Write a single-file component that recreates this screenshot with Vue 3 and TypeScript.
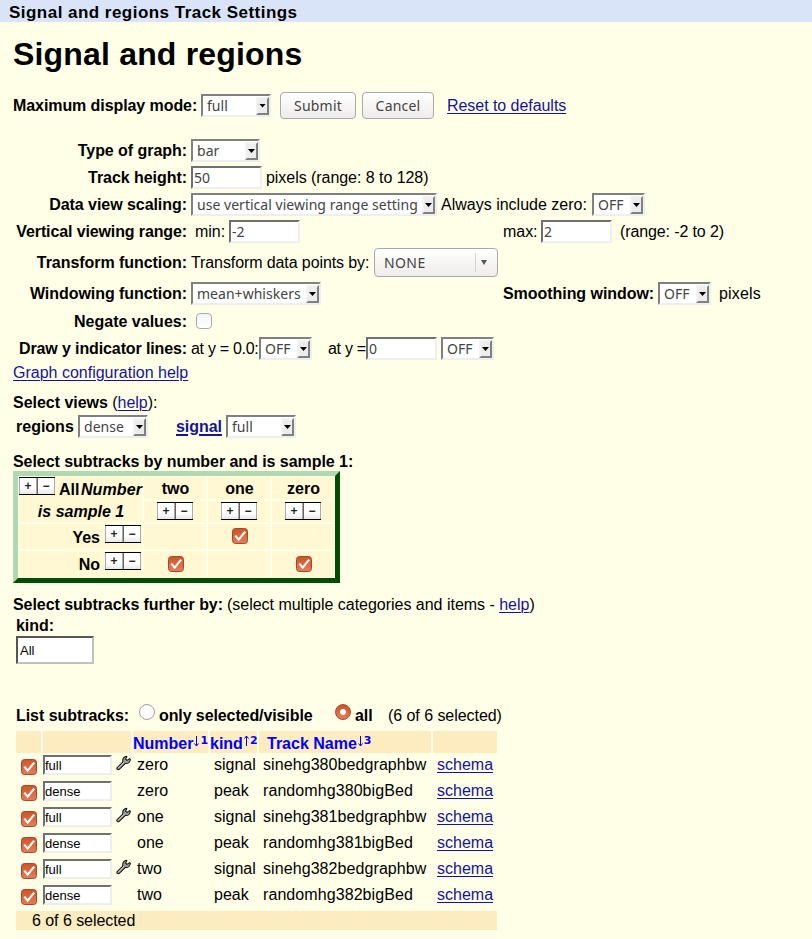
<script setup lang="ts">
import { ref } from 'vue'

interface Subtrack {
  mode: string
  number: string
  kind: string
  name: string
}

const trackHeight = ref('50')
const rangeMin = ref('-2')
const rangeMax = ref('2')
const lineAt = ref('0')

const columns: string[] = ['two', 'one', 'zero']
const matrix: { label: string; checked: boolean[] }[] = [
  { label: 'Yes', checked: [false, true, false] },
  { label: 'No', checked: [true, false, true] },
]

const subtracks: Subtrack[] = [
  { mode: 'full', number: 'zero', kind: 'signal', name: 'sinehg380bedgraphbw' },
  { mode: 'dense', number: 'zero', kind: 'peak', name: 'randomhg380bigBed' },
  { mode: 'full', number: 'one', kind: 'signal', name: 'sinehg381bedgraphbw' },
  { mode: 'dense', number: 'one', kind: 'peak', name: 'randomhg381bigBed' },
  { mode: 'full', number: 'two', kind: 'signal', name: 'sinehg382bedgraphbw' },
  { mode: 'dense', number: 'two', kind: 'peak', name: 'randomhg382bigBed' },
]
</script>

<template>
  <div class="page">
    <svg class="defs" width="0" height="0">
      <defs>
        <linearGradient id="orange" x1="0" y1="0" x2="0" y2="1">
          <stop offset="0" stop-color="#cf5226" />
          <stop offset="1" stop-color="#e57f5b" />
        </linearGradient>
        <symbol id="tick" viewBox="0 0 16 16">
          <rect x=".5" y=".5" width="15" height="15" rx="3" fill="url(#orange)" stroke="#a04a2c" />
          <path d="M3.3 7.6 L6.7 11.6 L13.2 3.6" fill="none" stroke="#fff" stroke-width="2.2" />
        </symbol>
      </defs>
    </svg>

    <header class="bar">Signal and regions Track Settings</header>
    <h1>Signal and regions</h1>

    <div class="row mode">
      <b class="w-mode">Maximum display mode:</b>
      <span class="sel w70"><span>full</span><i></i></span>
      <button class="btn submit">Submit</button>
      <button class="btn cancel">Cancel</button>
      <a class="reset">Reset to defaults</a>
    </div>

    <div class="row">
      <b class="label">Type of graph:</b>
      <span class="sel w69"><span>bar</span><i></i></span>
    </div>
    <div class="row">
      <b class="label">Track height:</b>
      <input v-model="trackHeight" class="field" />
      <span class="gap4">pixels (range: 8 to 128)</span>
    </div>
    <div class="row">
      <b class="label">Data view scaling:</b>
      <span class="sel w246"><span>use vertical viewing range setting</span><i></i></span>
      <span class="gap4 w-zero">Always include zero:</span>
      <span class="sel w53"><span>OFF</span><i></i></span>
    </div>
    <div class="row">
      <b class="label tight">Vertical viewing range:</b>
      <span class="gap4 w-min">min:</span>
      <div class="w-left"><input v-model="rangeMin" class="field" /></div>
      <span class="w-max">max:</span>
      <input v-model="rangeMax" class="field" />
      <span class="gap8 tight">(range: -2 to 2)</span>
    </div>
    <div class="row transform">
      <b class="label">Transform function:</b>
      <span class="w-transform">Transform data points by:</span>
      <span class="combo"><span>NONE</span><i></i></span>
    </div>
    <div class="row">
      <b class="label">Windowing function:</b>
      <div class="w-window"><span class="sel w130"><span>mean+whiskers</span><i></i></span></div>
      <b class="w-smooth">Smoothing window:</b>
      <span class="sel w53"><span>OFF</span><i></i></span>
      <span class="gap8 pixels">pixels</span>
    </div>
    <div class="row negate">
      <b class="label">Negate values:</b>
      <span class="empty-check"></span>
    </div>
    <div class="row">
      <b class="label tight">Draw y indicator lines:</b>
      <span class="w-line1">at y = 0.0:</span>
      <span class="sel w53"><span>OFF</span><i></i></span>
      <span class="w-line2">at y =</span>
      <input v-model="lineAt" class="field" />
      <span class="sel w53 gap4"><span>OFF</span><i></i></span>
    </div>
    <div class="row short"><a class="confhelp">Graph configuration help</a></div>

    <div class="row short views"><b>Select views</b>&nbsp;(<a>help</a>):</div>
    <div class="row">
      <b class="w-regions">regions</b>
      <span class="sel w70"><span>dense</span><i></i></span>
      <a class="signal">signal</a>
      <span class="sel w70"><span>full</span><i></i></span>
    </div>

    <div class="row short by"><b>Select subtracks by number and is sample 1:</b></div>
    <div class="matrix">
      <div class="corner">
        <div class="corner-top">
          <span class="pm"><i>+</i><i>−</i></span><b>All</b><em>Number</em>
        </div>
        <em class="sample">is sample 1</em>
      </div>
      <b v-for="c in columns" :key="c" class="cell title">{{ c }}</b>
      <div v-for="c in columns" :key="c + '-pm'" class="cell buttons"><span class="pm"><i>+</i><i>−</i></span></div>
      <template v-for="r in matrix" :key="r.label">
        <div class="cell side"><b>{{ r.label }}</b><span class="pm"><i>+</i><i>−</i></span></div>
        <div v-for="(on, k) in r.checked" :key="k" class="cell box">
          <svg v-if="on" class="check" width="16" height="16"><use href="#tick" /></svg>
        </div>
      </template>
    </div>

    <div class="row short further">
      <b class="w-further">Select subtracks further by:</b>
      <span class="multi">(select multiple categories and items - <a>help</a>)</span>
    </div>
    <div class="row kind"><b>kind:</b></div>
    <div class="kind-box">All</div>

    <div class="row short list">
      <b class="w-list">List subtracks:</b>
      <span class="radio"></span>
      <b class="w-only">only selected/visible</b>
      <span class="radio on"></span>
      <b class="w-all">all</b>
      <span>(6 of 6 selected)</span>
    </div>

    <div class="subs head">
      <span></span><span></span>
      <span class="h">Number<svg width="7" height="13"><path d="M3.5 1v10M1.5 8.5l2 2.5 2-2.5" /></svg><sup>1</sup></span>
      <span class="h">kind<svg width="7" height="13"><path d="M3.5 11V1M1.5 3.5l2-2.5 2 2.5" /></svg><sup>2</sup></span>
      <span class="h name">Track Name<svg width="7" height="13"><path d="M3.5 1v10M1.5 8.5l2 2.5 2-2.5" /></svg><sup>3</sup></span>
      <span></span>
    </div>
    <div v-for="s in subtracks" :key="s.name" class="subs line">
      <svg class="row-check" width="16" height="16"><use href="#tick" /></svg>
      <div class="mode-cell">
        <span class="mode-box">{{ s.mode }}</span>
        <svg v-if="s.kind === 'signal'" class="wrench" width="15" height="16" viewBox="0 0 16 16">
          <path d="M1 13.2 L7.2 7 C6.8 4 8 1.6 11 .8 L11.6 1.4 L10.2 3.8 L11.8 5.2 L14.6 3.4 L15.3 4 C15 7 12.8 8.8 9.8 8.6 L3.2 15 C1.8 15.6 .4 14.6 1 13.2Z" fill="#999" stroke="#111" stroke-width="1.1" />
          <path d="M2.3 13.4 L8.6 7.4" stroke="#ddd" stroke-width="1" />
        </svg>
      </div>
      <span class="t">{{ s.number }}</span>
      <span class="t">{{ s.kind }}</span>
      <span class="t track">{{ s.name }}</span>
      <span class="t"><a>schema</a></span>
    </div>
    <footer class="foot">6 of 6 selected</footer>
  </div>
</template>

<style>
body {
  margin: 0;
  background: #ffffe8;
}
</style>

<style scoped>
.page {
  box-sizing: border-box;
  width: 812px;
  height: 939px;
  overflow: hidden;
  background: #ffffe8;
  color: #000;
  font: 16px/20px "Liberation Sans", Arial, sans-serif;
  white-space: nowrap;
}
.defs { display: block; height: 0; }
.bar {
  height: 22px;
  padding-left: 9px;
  background: #d9e4f8;
  font-size: 17px;
  font-weight: bold;
  line-height: 25px;
  letter-spacing: .47px;
}
h1 {
  height: 60px;
  margin: 0;
  padding-left: 13px;
  font-size: 32px;
  line-height: 65px;
  letter-spacing: .18px;
}
.row {
  display: flex;
  align-items: center;
  height: 27px;
  padding-left: 13px;
  letter-spacing: -.05px;
}
.row > * { flex: none; }
.mode { height: 46px; margin-bottom: 9px; }
.w-mode, .reset { padding-top: 1px; }
.transform { height: 35px; }
.negate { height: 28px; }
.negate .label { padding-top: 1px; letter-spacing: 0; }
.short { height: 21px; }
.label { width: 174px; margin-right: 4px; text-align: right; }
.label.tight, .tight { letter-spacing: -.12px; }
.w-mode { width: 188px; letter-spacing: -.08px; }
.w-zero { width: 151px; letter-spacing: 0; }
.w-min { width: 34px; }
.w-left { width: 274px; display: flex; }
.w-max { width: 38px; }
.w-transform { width: 183px; letter-spacing: -.1px; }
.w-window { width: 312px; display: flex; }
.w-smooth { width: 155px; }
.w-line1 { width: 68px; letter-spacing: -.3px; }
.w-line2 { width: 38px; margin-left: 16px; letter-spacing: -.3px; }
.gap4 { margin-left: 4px; }
.gap8 { margin-left: 8px; }
.pixels { letter-spacing: .15px; }
.confhelp { letter-spacing: 0; }

a { color: #14149b; text-decoration: underline; text-underline-offset: 2px; text-decoration-thickness: 1px; }

.sel {
  box-sizing: border-box;
  display: flex;
  justify-content: space-between;
  height: 23px;
  padding: 1px 0 0 4px;
  border: 2px solid;
  border-color: #808080 #eee #eee #808080;
  background: #fff;
  color: #444;
  font: 14px/18px "Noto Sans", sans-serif;
  letter-spacing: .03px;
}
.sel i {
  box-sizing: border-box;
  display: flex;
  align-items: center;
  justify-content: center;
  width: 13px;
  height: 18px;
  border: 2px solid;
  border-color: #f3f3f3 #808080 #808080 #f3f3f3;
  background: #ececec;
}
.sel i::after {
  content: "";
  width: 7px;
  height: 4px;
  background: #000;
  clip-path: polygon(0 0, 100% 0, 50% 100%);
}
.w53 { width: 53px; }
.w69 { width: 69px; }
.w70 { width: 70px; }
.w130 { width: 130px; }
.w246 { width: 246px; }

.field {
  box-sizing: border-box;
  width: 71px;
  height: 23px;
  padding: 0 1px;
  border: 2px solid;
  border-color: #707070 #eee #eee #707070;
  border-radius: 0;
  background: #fff;
  color: #444;
  font: 14px "Noto Sans", sans-serif;
  outline: 0;
}
.btn, .combo {
  box-sizing: border-box;
  height: 27px;
  padding: 0;
  border: 1px solid #aaa;
  border-radius: 4px;
  background: linear-gradient(#fff, #eeecea);
  color: #444;
  font: 14px/25px "Noto Sans", sans-serif;
}
.submit { width: 76px; margin-left: 9px; letter-spacing: .2px; }
.cancel { width: 72px; margin-left: 6px; letter-spacing: .2px; }
.reset { margin-left: 13px; }
.combo {
  display: flex;
  align-items: center;
  justify-content: space-between;
  width: 124px;
  height: 29px;
  padding-left: 9px;
  letter-spacing: .4px;
}
.combo i {
  display: flex;
  align-items: center;
  width: 16px;
  height: 19px;
  padding-left: 5px;
  border-left: 1px solid #d2d2d2;
}
.combo i::after {
  content: "";
  border: 3px solid transparent;
  border-top: 5px solid #555;
  border-bottom: 0;
}
.empty-check {
  box-sizing: border-box;
  width: 16px;
  height: 16px;
  margin-left: 5px;
  border: 1px solid #a8a8a8;
  border-radius: 4px;
  background: linear-gradient(#f3f3f3, #fff);
}
.views { margin-top: 9px; letter-spacing: -.03px; }
.w-regions { width: 62px; padding-left: 3px; letter-spacing: 0; }
.signal { width: 50px; margin-left: 28px; font-weight: bold; text-decoration-thickness: 2px; }
.by { height: 20px; margin-top: 11px; }
.by b { padding-top: 2px; }

.matrix {
  box-sizing: border-box;
  display: grid;
  grid-template-columns: 123px 62px 62px 62px;
  grid-template-rows: 22px 21px 25px 26px;
  gap: 2px;
  width: 327px;
  height: 112px;
  margin-left: 13px;
  padding: 1px;
  border: 5px solid;
  border-color: #b0d9b0 #004c00 #004c00 #b0d9b0;
}
.cell, .corner { background: #fff8d2; }
.cell { display: flex; align-items: center; justify-content: center; }
.title { padding: 2px 0 0 1px; }
.buttons { align-items: flex-start; padding-top: 1px; }
.box { padding-left: 2px; }
.box .check { margin-bottom: 1px; }
.corner { grid-row: span 2; }
.corner-top { display: flex; }
.corner-top b { width: 23px; margin-left: 4px; line-height: 25px; }
.corner-top em { line-height: 25px; letter-spacing: .1px; }
em { font-weight: bold; }
.sample { display: block; padding-left: 1px; line-height: 19px; text-align: center; }
.side { justify-content: flex-end; align-items: flex-start; padding: 1px 1px 0 0; }
.side b { margin-right: 4px; line-height: 25px; }
.side .pm { margin-left: 1px; }
.pm {
  box-sizing: border-box;
  display: flex;
  width: 36px;
  height: 18px;
  border-top: 1px solid #000;
  border-bottom: 1px solid #000;
}
.pm i {
  box-sizing: border-box;
  width: 18px;
  border: 1px solid #aaa;
  border-width: 0 1px;
  background: linear-gradient(#fff 60%, #e8e8e8);
  color: #222;
  font: bold 12px/16px "Liberation Sans", sans-serif;
  text-align: center;
}
.pm i:last-child { border-left-color: #666; }

.further { margin-top: 11px; }
.w-further { width: 214px; letter-spacing: -.06px; }
.multi { letter-spacing: -.02px; }
.kind { height: 21px; padding-left: 16px; }
.kind b { padding-top: 1px; }
.kind-box {
  box-sizing: border-box;
  width: 78px;
  height: 28px;
  margin-left: 16px;
  padding-left: 2px;
  border: 2px solid;
  border-color: #555 #c0c0c0 #c0c0c0 #555;
  background: #fff;
  font-size: 13px;
  line-height: 25px;
}
.list { margin-top: 41px; padding-left: 16px; }
.w-list { width: 123px; }
.radio {
  box-sizing: border-box;
  width: 16px;
  height: 16px;
  margin-bottom: 7px;
  border: 1px solid #a0a0a0;
  border-radius: 50%;
  background: #fdfdfd;
}
.radio.on {
  border-color: #a04a2c;
  background: radial-gradient(circle, #fff 0 2.6px, transparent 3.4px), linear-gradient(#cf5226, #e57f5b);
}
.w-only { width: 176px; margin-left: 4px; letter-spacing: -.1px; }
.w-all { width: 33px; margin-left: 4px; }

.subs {
  display: grid;
  grid-template-columns: 25px 88px 75px 47px 172px 64px;
  column-gap: 2px;
  width: 481px;
  margin-left: 16px;
}
.head { height: 22px; grid-template-rows: 22px; margin-top: 5px; }
.head span { background: #fcecc0; }
.h {
  display: flex;
  color: #00f;
  font-weight: bold;
  line-height: 25px;
}
.h svg { flex: none; margin-top: 4px; fill: none; stroke: #00f; stroke-width: 1; }
.h sup { font: bold 11px/19px "DejaVu Sans", sans-serif; }
.name { padding-left: 8px; }
.line { height: 26px; }
.row-check { margin: 6px 0 0 5px; }
.mode-cell { display: flex; align-items: flex-start; padding-top: 2px; }
.mode-box {
  box-sizing: border-box;
  flex: none;
  width: 69px;
  height: 20px;
  border: 2px solid;
  border-color: #707070 #eee #eee #707070;
  background: #fff;
  font-size: 13px;
  line-height: 18px;
}
.wrench { flex: none; margin-left: 4px; }
.t { padding-left: 4px; line-height: 23px; }
.track { letter-spacing: .08px; }
.foot {
  box-sizing: border-box;
  width: 481px;
  height: 19px;
  margin: 2px 0 0 16px;
  padding-left: 16px;
  background: #fcecc0;
  line-height: 19px;
  letter-spacing: -.05px;
}
</style>
